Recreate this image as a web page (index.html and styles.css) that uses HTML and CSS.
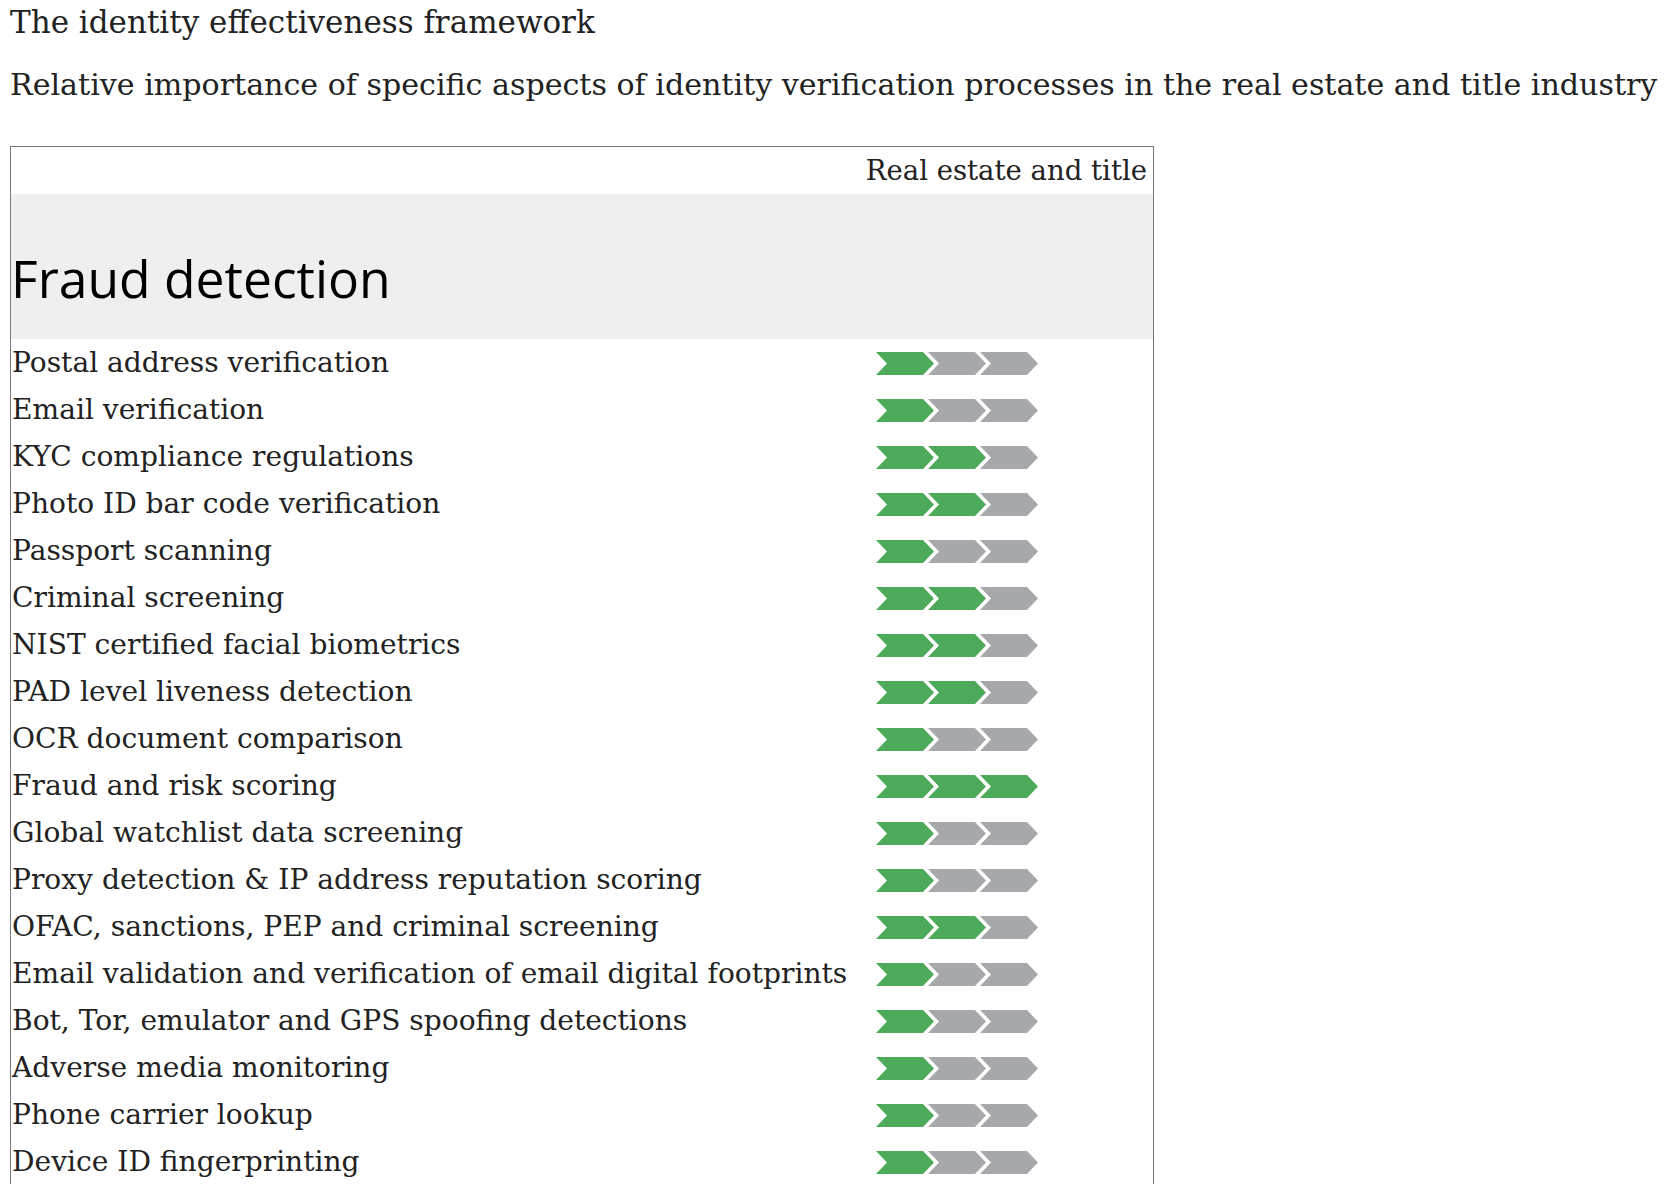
FILE: index.html
```html
<!DOCTYPE html>
<html lang="en">
<head>
<meta charset="utf-8">
<title>The identity effectiveness framework</title>
<link rel="stylesheet" href="styles.css">
</head>
<body>
<h1 class="title">The identity effectiveness framework</h1>
<p class="subtitle">Relative importance of specific aspects of identity verification processes in the real estate and title industry</p>

<div class="matrix">
  <div class="matrix-head">
    <div class="head-spacer"></div>
    <div class="head-col">Real estate and title</div>
  </div>
  <div class="category"><h2 class="category-name">Fraud detection</h2></div>

  <div class="row"><span class="label">Postal address verification</span><svg class="rating" viewBox="0 0 162 23"><polygon class="on" points="0,0 47,0 58,11.5 47,23 0,23 11,11.5"/><polygon class="off" points="52,0 99,0 110,11.5 99,23 52,23 63,11.5"/><polygon class="off" points="104,0 151,0 162,11.5 151,23 104,23 115,11.5"/></svg></div>
  <div class="row"><span class="label">Email verification</span><svg class="rating" viewBox="0 0 162 23"><polygon class="on" points="0,0 47,0 58,11.5 47,23 0,23 11,11.5"/><polygon class="off" points="52,0 99,0 110,11.5 99,23 52,23 63,11.5"/><polygon class="off" points="104,0 151,0 162,11.5 151,23 104,23 115,11.5"/></svg></div>
  <div class="row"><span class="label">KYC compliance regulations</span><svg class="rating" viewBox="0 0 162 23"><polygon class="on" points="0,0 47,0 58,11.5 47,23 0,23 11,11.5"/><polygon class="on" points="52,0 99,0 110,11.5 99,23 52,23 63,11.5"/><polygon class="off" points="104,0 151,0 162,11.5 151,23 104,23 115,11.5"/></svg></div>
  <div class="row"><span class="label">Photo ID bar code verification</span><svg class="rating" viewBox="0 0 162 23"><polygon class="on" points="0,0 47,0 58,11.5 47,23 0,23 11,11.5"/><polygon class="on" points="52,0 99,0 110,11.5 99,23 52,23 63,11.5"/><polygon class="off" points="104,0 151,0 162,11.5 151,23 104,23 115,11.5"/></svg></div>
  <div class="row"><span class="label">Passport scanning</span><svg class="rating" viewBox="0 0 162 23"><polygon class="on" points="0,0 47,0 58,11.5 47,23 0,23 11,11.5"/><polygon class="off" points="52,0 99,0 110,11.5 99,23 52,23 63,11.5"/><polygon class="off" points="104,0 151,0 162,11.5 151,23 104,23 115,11.5"/></svg></div>
  <div class="row"><span class="label">Criminal screening</span><svg class="rating" viewBox="0 0 162 23"><polygon class="on" points="0,0 47,0 58,11.5 47,23 0,23 11,11.5"/><polygon class="on" points="52,0 99,0 110,11.5 99,23 52,23 63,11.5"/><polygon class="off" points="104,0 151,0 162,11.5 151,23 104,23 115,11.5"/></svg></div>
  <div class="row"><span class="label">NIST certified facial biometrics</span><svg class="rating" viewBox="0 0 162 23"><polygon class="on" points="0,0 47,0 58,11.5 47,23 0,23 11,11.5"/><polygon class="on" points="52,0 99,0 110,11.5 99,23 52,23 63,11.5"/><polygon class="off" points="104,0 151,0 162,11.5 151,23 104,23 115,11.5"/></svg></div>
  <div class="row"><span class="label">PAD level liveness detection</span><svg class="rating" viewBox="0 0 162 23"><polygon class="on" points="0,0 47,0 58,11.5 47,23 0,23 11,11.5"/><polygon class="on" points="52,0 99,0 110,11.5 99,23 52,23 63,11.5"/><polygon class="off" points="104,0 151,0 162,11.5 151,23 104,23 115,11.5"/></svg></div>
  <div class="row"><span class="label">OCR document comparison</span><svg class="rating" viewBox="0 0 162 23"><polygon class="on" points="0,0 47,0 58,11.5 47,23 0,23 11,11.5"/><polygon class="off" points="52,0 99,0 110,11.5 99,23 52,23 63,11.5"/><polygon class="off" points="104,0 151,0 162,11.5 151,23 104,23 115,11.5"/></svg></div>
  <div class="row"><span class="label">Fraud and risk scoring</span><svg class="rating" viewBox="0 0 162 23"><polygon class="on" points="0,0 47,0 58,11.5 47,23 0,23 11,11.5"/><polygon class="on" points="52,0 99,0 110,11.5 99,23 52,23 63,11.5"/><polygon class="on" points="104,0 151,0 162,11.5 151,23 104,23 115,11.5"/></svg></div>
  <div class="row"><span class="label">Global watchlist data screening</span><svg class="rating" viewBox="0 0 162 23"><polygon class="on" points="0,0 47,0 58,11.5 47,23 0,23 11,11.5"/><polygon class="off" points="52,0 99,0 110,11.5 99,23 52,23 63,11.5"/><polygon class="off" points="104,0 151,0 162,11.5 151,23 104,23 115,11.5"/></svg></div>
  <div class="row"><span class="label">Proxy detection &amp; IP address reputation scoring</span><svg class="rating" viewBox="0 0 162 23"><polygon class="on" points="0,0 47,0 58,11.5 47,23 0,23 11,11.5"/><polygon class="off" points="52,0 99,0 110,11.5 99,23 52,23 63,11.5"/><polygon class="off" points="104,0 151,0 162,11.5 151,23 104,23 115,11.5"/></svg></div>
  <div class="row"><span class="label">OFAC, sanctions, PEP and criminal screening</span><svg class="rating" viewBox="0 0 162 23"><polygon class="on" points="0,0 47,0 58,11.5 47,23 0,23 11,11.5"/><polygon class="on" points="52,0 99,0 110,11.5 99,23 52,23 63,11.5"/><polygon class="off" points="104,0 151,0 162,11.5 151,23 104,23 115,11.5"/></svg></div>
  <div class="row"><span class="label">Email validation and verification of email digital footprints</span><svg class="rating" viewBox="0 0 162 23"><polygon class="on" points="0,0 47,0 58,11.5 47,23 0,23 11,11.5"/><polygon class="off" points="52,0 99,0 110,11.5 99,23 52,23 63,11.5"/><polygon class="off" points="104,0 151,0 162,11.5 151,23 104,23 115,11.5"/></svg></div>
  <div class="row"><span class="label">Bot, Tor, emulator and GPS spoofing detections</span><svg class="rating" viewBox="0 0 162 23"><polygon class="on" points="0,0 47,0 58,11.5 47,23 0,23 11,11.5"/><polygon class="off" points="52,0 99,0 110,11.5 99,23 52,23 63,11.5"/><polygon class="off" points="104,0 151,0 162,11.5 151,23 104,23 115,11.5"/></svg></div>
  <div class="row"><span class="label">Adverse media monitoring</span><svg class="rating" viewBox="0 0 162 23"><polygon class="on" points="0,0 47,0 58,11.5 47,23 0,23 11,11.5"/><polygon class="off" points="52,0 99,0 110,11.5 99,23 52,23 63,11.5"/><polygon class="off" points="104,0 151,0 162,11.5 151,23 104,23 115,11.5"/></svg></div>
  <div class="row"><span class="label">Phone carrier lookup</span><svg class="rating" viewBox="0 0 162 23"><polygon class="on" points="0,0 47,0 58,11.5 47,23 0,23 11,11.5"/><polygon class="off" points="52,0 99,0 110,11.5 99,23 52,23 63,11.5"/><polygon class="off" points="104,0 151,0 162,11.5 151,23 104,23 115,11.5"/></svg></div>
  <div class="row"><span class="label">Device ID fingerprinting</span><svg class="rating" viewBox="0 0 162 23"><polygon class="on" points="0,0 47,0 58,11.5 47,23 0,23 11,11.5"/><polygon class="off" points="52,0 99,0 110,11.5 99,23 52,23 63,11.5"/><polygon class="off" points="104,0 151,0 162,11.5 151,23 104,23 115,11.5"/></svg></div>
</div>
</body>
</html>
```

FILE: styles.css
```css
* { box-sizing: border-box; }

body {
  margin: 0;
  padding: 0 10px;
  background: #ffffff;
  color: #222222;
  font-family: "DejaVu Serif", "Liberation Serif", serif;
}

.title {
  margin: 2px 0 0;
  font-size: 31px;
  font-weight: 400;
  line-height: 40px;
  white-space: nowrap;
}

.subtitle {
  margin: 23px 0 0;
  font-size: 30.1px;
  line-height: 40px;
  white-space: nowrap;
}

.matrix {
  margin-top: 41px;
  width: 1144px;
  border: 1px solid #7a7a7a;
  border-bottom: none;
}

.matrix-head {
  display: grid;
  grid-template-columns: 1fr 288px;
  height: 47px;
}

.head-col {
  font-size: 27.5px;
  line-height: 47px;
  text-align: right;
  padding-right: 6px;
  white-space: nowrap;
}

.category {
  background: #efefef;
  height: 145px;
  display: flex;
  align-items: flex-end;
  padding-bottom: 36px;
}

.category-name {
  margin: 0;
  font-family: "Open Sans", "Noto Sans", sans-serif;
  font-weight: 400;
  font-size: 51.6px;
  line-height: 50px;
  color: #000000;
}

.row {
  display: grid;
  grid-template-columns: 1fr 288px;
  align-items: center;
  height: 47px;
}

.label {
  padding-left: 1px;
  font-size: 28.1px;
  line-height: 47px;
  white-space: nowrap;
}

.rating {
  display: block;
  width: 162px;
  height: 23px;
  margin: 2px 0 0 11px;
}

.on { fill: #4eaa5b; }
.off { fill: #a7a8ab; }
```
